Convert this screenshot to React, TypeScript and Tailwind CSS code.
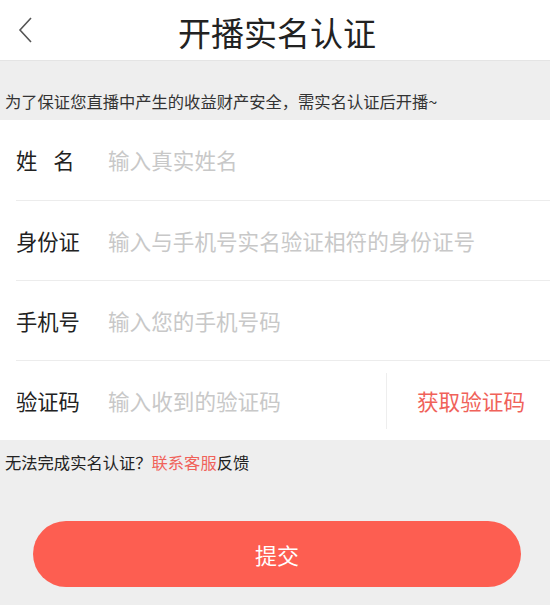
import * as React from "react"

const font = { fontFamily: '"Noto Sans CJK SC", "Noto Sans", sans-serif' }

interface Field {
  label: React.ReactNode
  placeholder: string
  code?: boolean
}

const fields: Field[] = [
  {
    label: (
      <span className="flex gap-[16px]">
        <span>姓</span>
        <span>名</span>
      </span>
    ),
    placeholder: "输入真实姓名",
  },
  { label: "身份证", placeholder: "输入与手机号实名验证相符的身份证号" },
  { label: "手机号", placeholder: "输入您的手机号码" },
  { label: "验证码", placeholder: "输入收到的验证码", code: true },
]

export default function App() {
  return (
    <div className="w-[550px] h-[605px] bg-[#eeeeee] flex flex-col" style={font}>
      <div className="h-[61px] bg-white border-b border-[#e4e4e4] flex items-center relative shrink-0">
        <svg className="absolute left-[16px] top-[16px]" width="20" height="28" viewBox="0 0 20 28">
          <path d="M15 2 L4 14 L15 26" fill="none" stroke="#555" strokeWidth="1.6" />
        </svg>
        <div className="w-full text-center text-[33px] leading-none text-[#222] pt-[4px] pl-[4px]">开播实名认证</div>
      </div>

      <div className="h-[59px] flex items-end pb-[11px] pl-[5px] text-[16.3px] leading-none text-[#333]">
        为了保证您直播中产生的收益财产安全，需实名认证后开播~
      </div>

      <div className="bg-white">
        {fields.map((f, i) => (
          <div key={i} className={`h-[80px] ml-[16px] flex items-center ${i > 0 ? "border-t border-[#ececec]" : ""}`}>
            <div className="w-[92px] text-[21.3px] text-[#222] leading-none">{f.label}</div>
            <div className="flex-1 text-[21.6px] text-[#c8c8c8] leading-none">{f.placeholder}</div>
            {f.code && (
              <div className="h-[56px] w-[164px] border-l border-[#eeeeee] flex items-center pl-[30px] text-[21.6px] leading-none text-[#f0625a]">
                获取验证码
              </div>
            )}
          </div>
        ))}
      </div>

      <div className="pl-[5px] pt-[14px] text-[16.3px] leading-none text-[#222]">
        无法完成实名认证？<span className="text-[#f0625a]">联系客服</span>反馈
      </div>

      <div className="pl-[33px] pr-[29px] pt-[51px]">
        <button className="w-full h-[66px] rounded-full bg-[#fd5e51] text-white text-[22px] leading-none">
          提交
        </button>
      </div>
    </div>
  )
}
